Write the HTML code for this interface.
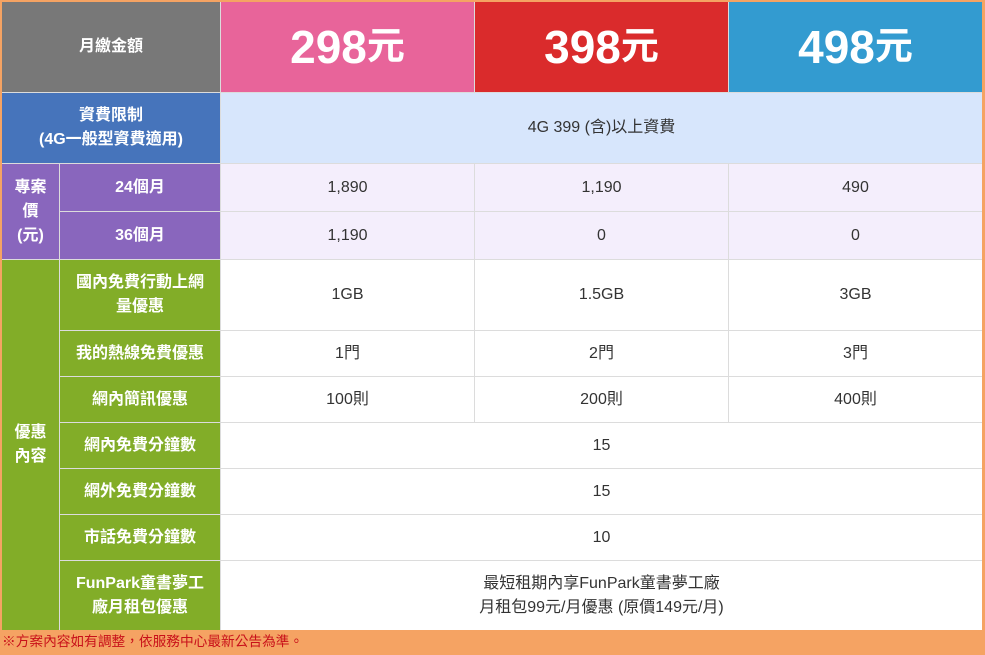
<!DOCTYPE html>
<html><head><meta charset="utf-8"><style>
body{margin:0;width:985px;height:655px;background:#f5a363;position:relative;overflow:hidden;font-family:"Liberation Sans","Noto Sans CJK TC",sans-serif}
#t{position:absolute;left:2px;top:2px;width:980px;height:628px;background:#dcdcdc}
.c{position:absolute;display:flex;align-items:center;justify-content:center;text-align:center;font-size:16px;line-height:24px;color:#333}
.w{color:#fff;font-weight:bold}
.g{background:#82ad28}.p{background:#8966bd}.lv{background:#f4eefc}.f{background:#fff}
.big{font-size:46px;font-weight:bold;color:#fff}
.big span{font-size:38px}
#n{position:absolute;left:2px;top:632px;font-size:13.7px;color:#c8101a;line-height:19px}
</style></head><body>
<div id="t"></div>
<div class="c w" style="left:2px;top:2px;width:218px;height:90px;background:#787878">月繳金額</div>
<div class="c big" style="left:221px;top:2px;width:253px;height:90px;background:#e8649a">298<span>元</span></div>
<div class="c big" style="left:475px;top:2px;width:253px;height:90px;background:#da2b2c">398<span>元</span></div>
<div class="c big" style="left:729px;top:2px;width:253px;height:90px;background:#339bd0">498<span>元</span></div>

<div class="c w" style="left:2px;top:93px;width:218px;height:70px;background:#4674bb">資費限制<br>(4G一般型資費適用)</div>
<div class="c" style="left:221px;top:93px;width:761px;height:70px;background:#d7e6fc">4G 399 (含)以上資費</div>

<div class="c w p" style="left:2px;top:164px;width:57px;height:95px">專案<br>價<br>(元)</div>
<div class="c w p" style="left:60px;top:164px;width:160px;height:47px">24個月</div>
<div class="c w p" style="left:60px;top:212px;width:160px;height:47px">36個月</div>
<div class="c lv" style="left:221px;top:164px;width:253px;height:47px">1,890</div>
<div class="c lv" style="left:475px;top:164px;width:253px;height:47px">1,190</div>
<div class="c lv" style="left:729px;top:164px;width:253px;height:47px">490</div>
<div class="c lv" style="left:221px;top:212px;width:253px;height:47px">1,190</div>
<div class="c lv" style="left:475px;top:212px;width:253px;height:47px">0</div>
<div class="c lv" style="left:729px;top:212px;width:253px;height:47px">0</div>

<div class="c w g" style="left:2px;top:260px;width:57px;height:370px">優惠<br>內容</div>
<div class="c w g" style="left:60px;top:260px;width:160px;height:70px">國內免費行動上網<br>量優惠</div>
<div class="c f" style="left:221px;top:260px;width:253px;height:70px">1GB</div>
<div class="c f" style="left:475px;top:260px;width:253px;height:70px">1.5GB</div>
<div class="c f" style="left:729px;top:260px;width:253px;height:70px">3GB</div>

<div class="c w g" style="left:60px;top:331px;width:160px;height:45px">我的熱線免費優惠</div>
<div class="c f" style="left:221px;top:331px;width:253px;height:45px">1門</div>
<div class="c f" style="left:475px;top:331px;width:253px;height:45px">2門</div>
<div class="c f" style="left:729px;top:331px;width:253px;height:45px">3門</div>

<div class="c w g" style="left:60px;top:377px;width:160px;height:45px">網內簡訊優惠</div>
<div class="c f" style="left:221px;top:377px;width:253px;height:45px">100則</div>
<div class="c f" style="left:475px;top:377px;width:253px;height:45px">200則</div>
<div class="c f" style="left:729px;top:377px;width:253px;height:45px">400則</div>

<div class="c w g" style="left:60px;top:423px;width:160px;height:45px">網內免費分鐘數</div>
<div class="c f" style="left:221px;top:423px;width:761px;height:45px">15</div>
<div class="c w g" style="left:60px;top:469px;width:160px;height:45px">網外免費分鐘數</div>
<div class="c f" style="left:221px;top:469px;width:761px;height:45px">15</div>
<div class="c w g" style="left:60px;top:515px;width:160px;height:45px">市話免費分鐘數</div>
<div class="c f" style="left:221px;top:515px;width:761px;height:45px">10</div>
<div class="c w g" style="left:60px;top:561px;width:160px;height:69px">FunPark童書夢工<br>廠月租包優惠</div>
<div class="c f" style="left:221px;top:561px;width:761px;height:69px">最短租期內享FunPark童書夢工廠<br>月租包99元/月優惠 (原價149元/月)</div>
<div id="n">※方案內容如有調整，依服務中心最新公告為準。</div>
</body></html>
